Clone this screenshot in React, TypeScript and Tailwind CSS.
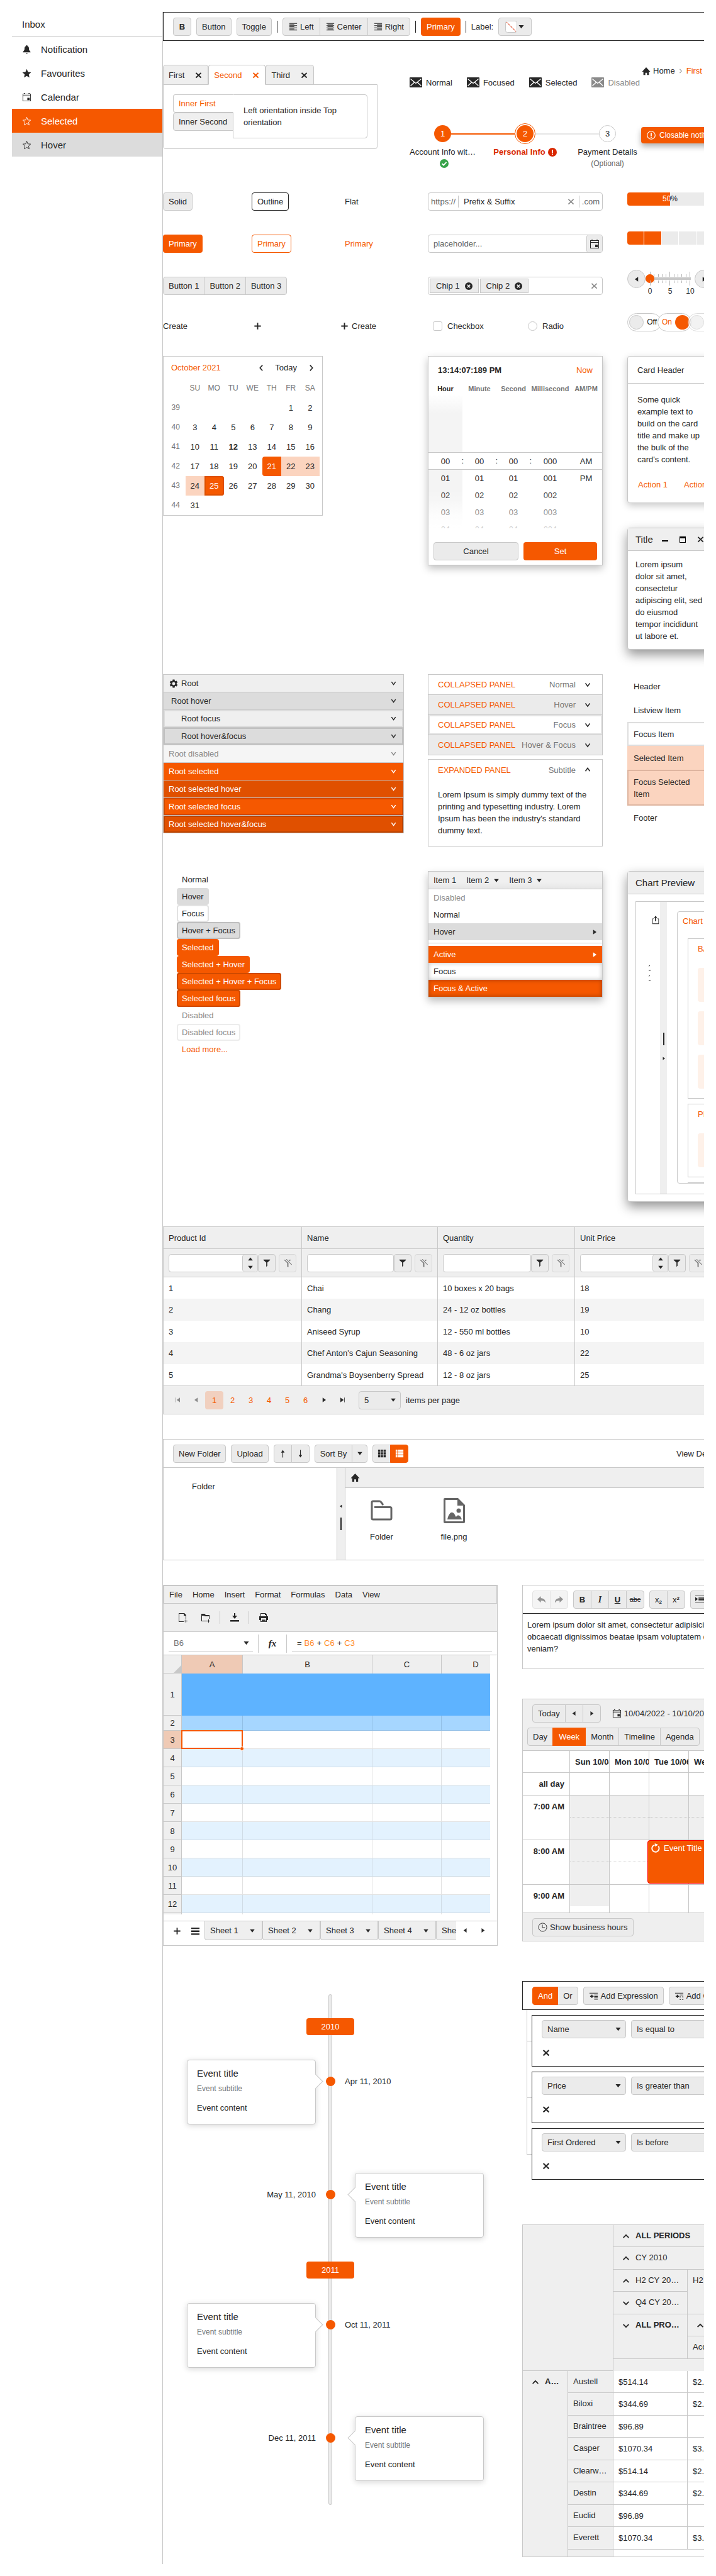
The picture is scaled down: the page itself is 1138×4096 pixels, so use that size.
import React from "react";
import { MdSettings } from "react-icons/md";

const PATHS: Record<string, string> = {
  bell: "M8 1a1.4 1.4 0 0 0-1.4 1.5C4.6 3.2 4.2 5 4.2 7.5 4.2 10.4 1.5 11 1.5 13h13c0-2-2.7-2.6-2.7-5.5 0-2.5-.4-4.3-2.4-5A1.4 1.4 0 0 0 8 1zM6.5 14a1.5 1.5 0 0 0 3 0z",
  star: "M8 .8l2.200 5 5.200.5-3.900 3.600 1.100 5.300L8 12.500l-4.600 2.700 1.100-5.300L.6 6.300l5.200-.5z",
  calendar: "M3 1v1H1v13h14V2h-2V1h-2v1H5V1zM2 3h12v2H2zM2 6h12v8H2zM9 9h4v4H9z",
  alignLeft: "M1 2h14v1H1zM1 4h9v1H1zM1 6h14v1H1zM1 8h9v1H1zM1 10h14v1H1zM1 12h9v1H1zM1 14h14v1H1z",
  alignCenter: "M1 2h14v1H1zM3 4h10v1H3zM1 6h14v1H1zM3 8h10v1H3zM1 10h14v1H1zM3 12h10v1H3zM1 14h14v1H1z",
  alignRight: "M1 2h14v1H1zM6 4h9v1H6zM1 6h14v1H1zM6 8h9v1H6zM1 10h14v1H1zM6 12h9v1H6zM1 14h14v1H1z",
  down: "M3 5h10l-5 6.5z",
  up: "M3 11h10L8 4.5z",
  left: "M11 3v10L4 8z",
  right: "M5 3v10l7-5z",
  home: "M8 1L.5 9H3v6h3.500v-4h3v4H13V9h2.500z",
  plus: "M7 2.500h2V7h4.500v2H9v4.500H7V9H2.500V7H7z",
  funnel: "M2 2h12v1L9 7.500v6L7 15V7.500L2 3z",
  funnelOff: "M1 2h2l4.500 4.500 1.500 1V15l-2-1V8zM5 1.500L6 1l9 9.500-1 .5zM9 2h4.500l-2.300 2.500z",
  first: "M3 3h1v10H3zM12 3v10L5 8z",
  last: "M12 3h1v10h-1zM4 3v10l7-5z",
  arrowUp: "M8 1.500l3 4.500H8.600v8.500H7.400V6H5z",
  arrowDown: "M8 14.500L5 10h2.400V1.500h1.200V10H11z",
  grid: "M1 1h4v4H1zM6 1h4v4H6zM11 1h4v4h-4zM1 6h4v4H1zM6 6h4v4H6zM11 6h4v4h-4zM1 11h4v4H1zM6 11h4v4H6zM11 11h4v4h-4z",
  list: "M1 1h3v4H1zM5 1h10v4H5zM1 6h3v4H1zM5 6h10v4H5zM1 11h3v4H1zM5 11h10v4H5z",
  fileAdd: "M1 1h9l3 3v6h-1V5h-3V2H2v12h7v1H1zM12 11h1v2h2v1h-2v2h-1v-2h-2v-1h2z",
  folderAdd: "M1 2h5l2 2h6v6h-1V6H6V5H2v8h8v1H1zM12 11h1v2h2v1h-2v2h-1v-2h-2v-1h2z",
  download: "M7 1h2v4h3L8 10 4 5h3zM1 12h14v2.500H1z",
  print: "M4 1h7l2 2v3h2v6h-2v3H3v-3H1V6h2V1zM4 2v4h8V4h-2V2zM4 9v5h8V9zM5 10h6v1H5zM5 12h6v1H5z",
  undo: "M7 2v3.500c4.500 0 8 2 8 8-1.500-3-4-4-8-4V13L1 7.500z",
  redo: "M9 2v3.500c-4.500 0-8 2-8 8 1.500-3 4-4 8-4V13l6-5.500z",
  indent: "M0 1h16v1H0zM6 4h10v1H6zM6 6h10v1H6zM6 8h10v1H6zM6 10h10v1H6zM0 13h16v1H0zM0 4l5 3.500L0 11z",
  bars: "M1 2h14v2.500H1zM1 7h14v2.500H1zM1 12h14v2.500H1z",
  export: "M8 0l3 4H9v6H7V4H5zM2 5h3v1H3v8h10V6h-2V5h3v10H2z",
  addExp: "M1 3h14v1H1zM4 6h2v2h2v1.500H6v2H4v-2H2V8h2zM9 6h6v1H9zM9 8.500h6v1H9zM9 11h6v1H9zM9 13.500h6v1H9z",
  addGroup: "M1 3h14v1H1zM4 6h2v2h2v1.500H6v2H4v-2H2V8h2zM9 6h6v1H9zM9 9h2v1h-1v1H9zM13 9h2v2h-1v-1h-1zM9 13h1v1h1v1H9zM14 13h1v2h-2v-1h1z",
};

function Icon({ name, size = 14, className = "" }: { name: string; size?: number; className?: string }) {
  return (
    <svg width={size} height={size} viewBox="0 0 16 16" fill="currentColor" fillRule="evenodd" className={"shrink-0 " + className} aria-hidden="true">
      <path d={PATHS[name]} />
    </svg>
  );
}

const LINES: Record<string, string> = {
  close: "M3 3.500l10 9.500M13 3.500L3 13",
  chevDown: "M4 5l4 5.500L12 5",
  chevUp: "M4 10.500L8 5l4 5.500",
  chevLeft: "M10.500 3L6 8l4.500 5",
  chevRight: "M5.500 3L10 8l-4.500 5",
  chevWideDown: "M3 5.500l5 5 5-5",
  chevWideUp: "M3 10.500l5-5 5 5",
  star: "M8 1.500l1.900 4.700 4.700.3-3.500 3.300 1 4.800L8 12l-4.100 2.600 1-4.800L1.400 6.500l4.700-.3z",
};

function Line({ name, size = 14, w = 2, className = "" }: { name: string; size?: number; w?: number; className?: string }) {
  return (
    <svg width={size} height={size} viewBox="0 0 16 16" fill="none" stroke="currentColor" strokeWidth={w} className={"shrink-0 " + className} aria-hidden="true">
      <path d={LINES[name]} />
    </svg>
  );
}

const BTN = "inline-flex h-[29px] shrink-0 items-center justify-center whitespace-nowrap rounded-[4px] border border-[#c8c8c8] bg-[#ebebeb] px-2";
const SEG = "-ml-px inline-flex h-[29px] shrink-0 items-center justify-center gap-1 whitespace-nowrap border border-[#c8c8c8] bg-[#ebebeb] px-2 first:ml-0 first:rounded-l-[4px] last:rounded-r-[4px]";
const SEG_ON = "relative -ml-px inline-flex h-[29px] shrink-0 items-center justify-center whitespace-nowrap border border-[#f55800] bg-[#f55800] px-2 text-white first:ml-0 first:rounded-l-[4px] last:rounded-r-[4px]";

function Sidebar() {
  const items = [
    { label: "Notification", icon: <Icon name="bell" size={15} />, cls: "" },
    { label: "Favourites", icon: <Icon name="star" size={15} />, cls: "" },
    { label: "Calendar", icon: <Icon name="calendar" size={15} />, cls: "" },
    { label: "Selected", icon: <Line name="star" size={15} w={1} />, cls: "bg-[#f55800] text-white" },
    { label: "Hover", icon: <Line name="star" size={15} w={1} />, cls: "bg-[#dcdcdc]" },
  ];
  return (
    <nav className="w-[239px] shrink-0 text-[15px]" aria-label="Mail folders">
      <h1 className="flex h-[40px] items-center border-b border-[#c8c8c8] px-4">Inbox</h1>
      <ul>
        {items.map((i) => (
          <li key={i.label}>
            <a href="#" className={"flex h-[38px] items-center gap-[15px] px-4 " + i.cls}>
              {i.icon}
              {i.label}
            </a>
          </li>
        ))}
      </ul>
    </nav>
  );
}

function Rule() {
  return <span className="h-[19px] w-px shrink-0 bg-[#272727]" />;
}

function Toolbar() {
  return (
    <div role="toolbar" className="flex h-[46px] items-center gap-2 border border-r-0 border-[#272727] pl-[15px]">
      <button className={BTN + " w-[29px] font-bold"}>B</button>
      <button className={BTN}>Button</button>
      <button className={BTN}>Toggle</button>
      <Rule />
      <div className="flex">
        <button className={SEG + " px-[9px]"}><Icon name="alignLeft" size={14} />Left</button>
        <button className={SEG + " px-[9px]"}><Icon name="alignCenter" size={14} />Center</button>
        <button className={SEG + " px-[9px]"}><Icon name="alignRight" size={14} />Right</button>
      </div>
      <Rule />
      <button className="h-[29px] rounded-[4px] bg-[#f55800] px-[9px] text-white">Primary</button>
      <Rule />
      <span>Label:</span>
      <button aria-label="Colour" className={BTN + " w-[53px] justify-between px-[5px]"}>
        <svg width="19" height="19" viewBox="0 0 19 19" aria-hidden="true">
          <rect x=".5" y=".5" width="18" height="18" rx="3" fill="#fff" stroke="#c8c8c8" />
          <path d="M2 2l15 15" stroke="#d92800" />
        </svg>
        <Icon name="down" size={13} />
      </button>
    </div>
  );
}

function Tabs() {
  const tab = "-mb-px flex h-[32px] items-center gap-4 rounded-t-[4px] border border-[#c8c8c8] px-2 ";
  return (
    <div className="w-[341px] shrink-0">
      <div role="tablist" className="flex">
        <button role="tab" className={tab + "bg-[#efefef]"}>First<Line name="close" size={13} w={2.4} /></button>
        <button role="tab" className={tab + "relative border-b-white bg-white text-[#f55800]"}>Second<Line name="close" size={13} w={2.4} /></button>
        <button role="tab" className={tab + "bg-[#efefef]"}>Third<Line name="close" size={13} w={2.4} /></button>
      </div>
      <div className="flex h-[103px] items-start rounded-b-[4px] border border-[#c8c8c8] p-[15px]">
        <div role="tablist" className="-mr-px flex w-[96px] shrink-0 flex-col">
          <button role="tab" className="relative h-[29px] rounded-l-[4px] border border-[#c8c8c8] border-r-white bg-white pl-2 text-left text-[#f55800]">Inner First</button>
          <button role="tab" className="h-[29px] rounded-l-[4px] border border-[#c8c8c8] bg-[#efefef] pl-2 text-left">Inner Second</button>
        </div>
        <div className="flex-1 rounded-r-[4px] border border-[#c8c8c8] px-4 py-[15px]">Left orientation inside Top orientation</div>
      </div>
    </div>
  );
}

function Mail({ label, cls = "" }: { label: string; cls?: string }) {
  return (
    <span className={"flex items-center gap-[6px] " + cls}>
      <svg width="20" height="16" viewBox="0 0 20 16" aria-hidden="true">
        <rect width="20" height="16" rx="1" fill="currentColor" />
        <path d="M1.500 2.500l8.500 7 8.500-7M1.500 13.500L7.500 8M18.500 13.500L12.500 8" fill="none" stroke="#fff" strokeWidth="1.300" />
      </svg>
      {label}
    </span>
  );
}

function Stepper() {
  return (
    <div className="w-[381px] shrink-0">
      <div className="mt-5 ml-[13px] flex h-4 w-[400px] items-center gap-[23px]">
        <Mail label="Normal" />
        <Mail label="Focused" />
        <Mail label="Selected" />
        <Mail label="Disabled" cls="text-[#8a8a8a]" />
      </div>
      <ol className="mt-[57px] flex">
        <li className="flex w-[131px] shrink-0 flex-col items-center">
          <div className="flex h-[33px] w-full items-center">
            <span className="flex-1" />
            <span className="grid size-[27px] place-items-center rounded-full bg-[#f55800] text-white">1</span>
            <span className="h-[2px] flex-1 bg-[#f55800]" />
          </div>
          <span className="mt-[3px]">Account Info wit…</span>
          <svg width="14" height="14" viewBox="0 0 16 16" className="mt-[2px] ml-1" aria-hidden="true">
            <circle cx="8" cy="8" r="8" fill="#37a34a" />
            <path d="M4 8.200l2.800 2.800L12 5.500" fill="none" stroke="#fff" strokeWidth="2" />
          </svg>
        </li>
        <li className="flex w-[131px] shrink-0 flex-col items-center">
          <div className="flex h-[33px] w-full items-center">
            <span className="h-[2px] flex-1 bg-[#f55800]" />
            <span className="grid size-[33px] place-items-center rounded-full border border-[#f55800]">
              <span className="grid size-[27px] place-items-center rounded-full bg-[#f55800] text-white">2</span>
            </span>
            <span className="h-[2px] flex-1 bg-[#e6e6e6]" />
          </div>
          <span className="mt-[3px] flex items-center gap-1 font-bold text-[#d92800]">
            Personal Info
            <svg width="14" height="14" viewBox="0 0 16 16" aria-hidden="true">
              <circle cx="8" cy="8" r="8" fill="#d92800" />
              <path d="M7 3.500h2V9H7zM7 10.500h2v2H7z" fill="#fff" />
            </svg>
          </span>
        </li>
        <li className="flex w-[131px] shrink-0 flex-col items-center">
          <div className="flex h-[33px] w-full items-center">
            <span className="h-[2px] flex-1 bg-[#e6e6e6]" />
            <span className="grid size-[27px] place-items-center rounded-full border border-[#c8c8c8]">3</span>
            <span className="flex-1" />
          </div>
          <span className="mt-[3px]">Payment Details</span>
          <span className="text-[12px] text-[#656565]">(Optional)</span>
        </li>
      </ol>
    </div>
  );
}

function NavigationRow() {
  return (
    <section className="mt-[38px] flex min-h-[203px]">
      <Tabs />
      <div className="ml-[38px]">
        <Stepper />
      </div>
      <div className="shrink-0">
        <nav aria-label="Breadcrumb" className="flex items-center gap-1 pl-px whitespace-nowrap">
          <a href="#" className="flex items-center gap-1"><Icon name="home" size={14} />Home</a>
          <Line name="chevRight" size={10} w={1.6} className="text-[#656565]" />
          <a href="#" className="text-[#f55800]">First item</a>
        </nav>
        <div role="status" className="mt-20 flex h-[26px] items-center gap-[6px] rounded-[4px] bg-[#f55800] px-[9px] text-[12px] whitespace-nowrap text-white shadow-[0_5px_10px_rgba(0,0,0,0.3)]">
          <svg width="14" height="14" viewBox="0 0 16 16" aria-hidden="true">
            <circle cx="8" cy="8" r="7.200" fill="none" stroke="currentColor" strokeWidth="1.300" />
            <path d="M7 3.500h2V9H7zM7 10.500h2v2H7z" fill="currentColor" />
          </svg>
          Closable notification
        </div>
      </div>
    </section>
  );
}

function Switch({ on, label, cls = "" }: { on?: boolean; label: string; cls?: string }) {
  return (
    <button role="switch" aria-checked={!!on} className={"relative -ml-[6px] flex h-[29px] w-[54px] shrink-0 items-center justify-between rounded-full border border-[#c8c8c8] bg-white px-[2px] text-[12px] first:ml-0 " + cls}>
      {on ? (
        <>
          <span className="pl-[4px] text-[#f55800]">{label}</span>
          <span className="size-[23px] rounded-full bg-[#f55800]" />
        </>
      ) : (
        <>
          <span className="size-[23px] rounded-full border border-[#c8c8c8] bg-[#ebebeb]" />
          <span className="pr-[4px]">{label}</span>
        </>
      )}
    </button>
  );
}

function Chip({ label }: { label: string }) {
  return (
    <span className="flex h-[23px] items-center gap-2 border border-[#c8c8c8] bg-[#ebebeb] px-[9px]">
      {label}
      <svg width="12" height="12" viewBox="0 0 16 16" aria-hidden="true">
        <circle cx="8" cy="8" r="8" fill="#272727" />
        <path d="M5 5l6 6M11 5l-6 6" stroke="#fff" strokeWidth="2" />
      </svg>
    </span>
  );
}

function Ticks({ align }: { align: string }) {
  return (
    <div className={"flex h-[8px] justify-between " + align}>
      {Array.from({ length: 11 }, (_, i) => (
        <span key={i} className={i % 5 === 0 ? "h-[8px] w-px bg-[#b5b5b5]" : "h-[4px] w-px bg-[#b5b5b5]"} />
      ))}
    </div>
  );
}

function InputsRow() {
  return (
    <section className="grid min-h-[260px] grid-cols-[421px_317px_minmax(0,1fr)]">
      <div>
        <div className="grid h-[67px] grid-cols-[141px_140px_140px] items-start justify-items-start">
          <button className={BTN}>Solid</button>
          <button className="h-[29px] rounded-[4px] border border-[#272727] px-2">Outline</button>
          <button className="h-[29px] px-2">Flat</button>
        </div>
        <div className="grid h-[67px] grid-cols-[141px_140px_140px] items-start justify-items-start">
          <button className="h-[29px] rounded-[4px] bg-[#f55800] px-[9px] text-white">Primary</button>
          <button className="h-[29px] rounded-[4px] border border-[#f55800] px-2 text-[#f55800]">Primary</button>
          <button className="h-[29px] px-2 text-[#f55800]">Primary</button>
        </div>
        <div className="flex h-[67px]">
          <button className={SEG}>Button 1</button>
          <button className={SEG}>Button 2</button>
          <button className={SEG}>Button 3</button>
        </div>
        <div className="grid h-[23px] grid-cols-[141px_140px_140px] items-center justify-items-start">
          <button>Create</button>
          <button aria-label="Add" className="pl-[2px]"><Icon name="plus" size={15} /></button>
          <button className="flex items-center gap-1"><Icon name="plus" size={15} />Create</button>
        </div>
      </div>
      <div className="w-[278px]">
        <div className="h-[67px]">
          <div className="flex h-[29px] items-center rounded-[4px] border border-[#c8c8c8] text-[#656565]">
            <span className="px-[4px]">https://</span>
            <span className="h-[19px] w-px bg-[#c8c8c8]" />
            <input aria-label="Address" defaultValue="Prefix & Suffix" className="min-w-0 flex-1 px-2 text-[#272727] outline-none" />
            <Line name="close" size={13} w={2} className="text-[#8a8a8a]" />
            <span className="ml-[6px] h-[19px] w-px bg-[#c8c8c8]" />
            <span className="px-[4px]">.com</span>
          </div>
        </div>
        <div className="h-[67px]">
          <div className="flex h-[29px] rounded-[4px] border border-[#c8c8c8]">
            <input aria-label="Date" placeholder="placeholder..." className="min-w-0 flex-1 px-2 outline-none placeholder:text-[#656565]" />
            <button aria-label="Open calendar" className="grid w-[25px] place-items-center rounded-[3px] border-l border-[#c8c8c8] bg-[#ebebeb]"><Icon name="calendar" size={16} /></button>
          </div>
        </div>
        <div className="h-[67px]">
          <div className="flex h-[29px] items-center gap-[2px] rounded-[4px] border border-[#c8c8c8] px-[2px]">
            <Chip label="Chip 1" />
            <Chip label="Chip 2" />
            <Line name="close" size={13} w={2} className="mr-[4px] ml-auto text-[#8a8a8a]" />
          </div>
        </div>
        <div className="flex h-[23px] items-center pl-2">
          <label className="flex w-[151px] items-center gap-2">
            <input type="checkbox" className="size-[15px] appearance-none rounded-[3px] border border-[#c8c8c8]" />
            Checkbox
          </label>
          <label className="flex items-center gap-2">
            <input type="radio" className="size-[15px] appearance-none rounded-full border border-[#c8c8c8]" />
            Radio
          </label>
        </div>
      </div>
      <div className="w-[136px]">
        <div role="progressbar" aria-valuenow={50} className="relative h-[21px] overflow-hidden rounded-[4px] bg-[#ebebeb] text-center text-[12px] leading-[21px]">
          50%
          <div aria-hidden="true" className="absolute inset-y-0 left-0 w-[68px] overflow-hidden bg-[#f55800] text-white">
            <div className="w-[136px]">50%</div>
          </div>
        </div>
        <div className="mt-[41px] flex h-[21px] gap-px overflow-hidden rounded-[4px]">
          <span className="flex-1 bg-[#f55800]" />
          <span className="flex-1 bg-[#f55800]" />
          <span className="flex-1 bg-[#ebebeb]" />
          <span className="flex-1 bg-[#ebebeb]" />
          <span className="flex-1 bg-[#ebebeb]" />
        </div>
        <div className="mt-[40px] flex h-[43px] items-start">
          <button aria-label="Decrease" className="grid size-[29px] shrink-0 place-items-center rounded-full border border-[#c8c8c8] bg-[#ebebeb]"><Icon name="left" size={12} /></button>
          <div className="w-[78px] shrink-0 px-[7px] pt-[3px]">
            <Ticks align="items-end" />
            <input type="range" min={0} max={10} defaultValue={0} aria-label="Amount" className="-mx-[7px] -my-[4px] block h-[14px] w-[78px] appearance-none bg-[linear-gradient(#c8c8c8,#c8c8c8)] bg-[length:66px_4px] bg-center bg-no-repeat [&::-webkit-slider-thumb]:size-[14px] [&::-webkit-slider-thumb]:appearance-none [&::-webkit-slider-thumb]:rounded-full [&::-webkit-slider-thumb]:bg-[#f55800]" />
            <Ticks align="items-start" />
            <div className="-mx-[7px] flex justify-between text-[12px]">
              <span className="w-[14px] text-center">0</span>
              <span className="w-[14px] text-center">5</span>
              <span className="w-[14px] text-center">10</span>
            </div>
          </div>
          <button aria-label="Increase" className="grid size-[29px] shrink-0 place-items-center rounded-full border border-[#c8c8c8] bg-[#ebebeb]"><Icon name="right" size={12} /></button>
        </div>
        <div className="mt-[26px] flex">
          <Switch label="Off" />
          <Switch on label="On" />
          <Switch label="Off" cls="opacity-60" />
        </div>
      </div>
    </section>
  );
}

function CalendarBox() {
  const weeks: [number, (number | null)[]][] = [
    [39, [null, null, null, null, null, 1, 2]],
    [40, [3, 4, 5, 6, 7, 8, 9]],
    [41, [10, 11, 12, 13, 14, 15, 16]],
    [42, [17, 18, 19, 20, 21, 22, 23]],
    [43, [24, 25, 26, 27, 28, 29, 30]],
    [44, [31, null, null, null, null, null, null]],
  ];
  const style: Record<number, string> = {
    12: "font-bold",
    21: "rounded-l-[4px] bg-[#f55800] text-white",
    22: "bg-[#fbd4bf]",
    23: "bg-[#fbd4bf]",
    24: "bg-[#fbd4bf]",
    25: "rounded-r-[4px] bg-[#f55800] text-white shadow-[inset_0_0_0_2px_#dd4f00]",
  };
  return (
    <div className="w-[254px] border border-[#c8c8c8] px-[4px]">
      <div className="flex h-[35px] items-center pl-2">
        <button className="mr-auto text-[#f55800]">October 2021</button>
        <button aria-label="Previous month" className="grid w-[27px] place-items-center"><Line name="chevLeft" size={14} w={1.8} /></button>
        <button className="px-[9px]">Today</button>
        <button aria-label="Next month" className="grid w-[27px] place-items-center"><Line name="chevRight" size={14} w={1.8} /></button>
      </div>
      <table className="w-full table-fixed text-center">
        <thead>
          <tr className="h-[31px] text-[12px] text-[#757575]">
            <th />
            {["SU", "MO", "TU", "WE", "TH", "FR", "SA"].map((d) => <th key={d} className="font-normal">{d}</th>)}
          </tr>
        </thead>
        <tbody>
          {weeks.map(([n, days]) => (
            <tr key={n} className="h-[31px]">
              <td className="text-[12px] text-[#757575]">{n}</td>
              {days.map((d, i) => <td key={i} className={d ? style[d] : ""}>{d}</td>)}
            </tr>
          ))}
        </tbody>
      </table>
    </div>
  );
}

function TimePicker() {
  const cols = [
    { name: "Hour", v: ["00", "01", "02", "03", "04"] },
    { name: "Minute", v: ["00", "01", "02", "03", "04"] },
    { name: "Second", v: ["00", "01", "02", "03", "04"] },
    { name: "Millisecond", v: ["000", "001", "002", "003", "004"] },
    { name: "AM/PM", v: ["AM", "PM"] },
  ];
  const tpl = "grid grid-cols-[54px_54px_54px_63px_minmax(0,1fr)] ";
  return (
    <div className="h-[333px] w-[278px] border border-[#c8c8c8] bg-white shadow-[0_5px_12px_rgba(0,0,0,0.25)]">
      <div className="flex h-[43px] items-center justify-between px-[15px]">
        <b>13:14:07:189 PM</b>
        <button className="text-[#f55800]">Now</button>
      </div>
      <div className={tpl + "h-[17px] text-center text-[11px] leading-[16px] font-bold text-[#757575]"}>
        {cols.map((c, i) => <span key={c.name} className={i === 0 ? "text-[#272727]" : ""}>{c.name}</span>)}
      </div>
      <div className={tpl + "relative h-[213px] overflow-hidden text-center"}>
        <div className="bg-[linear-gradient(#ffffff,#f4f4f4_30px,#f4f4f4_170px,#ffffff)]" />
        <div className="absolute inset-x-0 top-[92px] h-[28px] border-y border-[#c8c8c8] bg-white" />
        <div className={tpl + "absolute inset-0"}>
          {cols.map((c, i) => (
            <ul key={c.name} className="relative pt-[93px]">
              {c.v.map((t) => <li key={t} className="h-[27px] leading-[27px]">{t}</li>)}
              {i < 3 && <li className="absolute top-[93px] -right-[2px] leading-[26px]">:</li>}
            </ul>
          ))}
        </div>
        <div className="absolute inset-x-0 bottom-0 h-[62px] bg-[linear-gradient(rgba(255,255,255,0),rgba(255,255,255,0.8))]" />
      </div>
      <div className="mt-[22px] flex gap-2 px-2">
        <button className={BTN + " flex-1"}>Cancel</button>
        <button className="h-[29px] flex-1 rounded-[4px] bg-[#f55800] text-white">Set</button>
      </div>
    </div>
  );
}

function PopupsRow() {
  return (
    <section className="grid min-h-[506px] grid-cols-[421px_317px_minmax(0,1fr)] items-start">
      <CalendarBox />
      <TimePicker />
      <div className="w-[136px]">
        <article className="h-[234px] rounded-[4px] border border-[#c8c8c8] bg-white shadow-[0_4px_12px_rgba(0,0,0,0.22)]">
          <h2 className="flex h-[43px] items-center border-b border-[#c8c8c8] px-[15px]">Card Header</h2>
          <p className="px-[15px] pt-[16px] pb-[21px]">Some quick example text to build on the card title and make up the bulk of the card's content.</p>
          <div className="flex gap-[26px] px-4 whitespace-nowrap text-[#f55800]">
            <button>Action 1</button>
            <button>Action 2</button>
          </div>
        </article>
        <article className="mt-[39px] h-[194px] rounded-[4px] border border-[#c8c8c8] bg-white shadow-[0_8px_18px_rgba(0,0,0,0.42)]">
          <div className="flex h-[36px] items-center border-b border-[#c8c8c8] bg-[#efefef] pr-[5px] pl-[12px] text-[15px]">
            <h2>Title</h2>
            <button aria-label="Minimize" className="ml-[5px] grid w-[28px] place-items-center pt-[4px]"><svg width="10" height="2" aria-hidden="true"><path d="M0 0h10v2H0z" /></svg></button>
            <button aria-label="Maximize" className="grid w-[29px] place-items-center"><svg width="10" height="10" aria-hidden="true"><path d="M0 0h10v10H0zM1 3v6h8V3z" fillRule="evenodd" /></svg></button>
            <button aria-label="Close" className="grid w-[28px] place-items-center"><Line name="close" size={13} w={2.2} /></button>
          </div>
          <p className="pt-[12px] pr-[13px] pl-[12px]">Lorem ipsum<br />dolor sit amet, consectetur adipiscing elit, sed do eiusmod tempor incididunt ut labore et.</p>
        </article>
      </div>
    </section>
  );
}

function PanelsRow() {
  const rows = [
    { t: "Root", c: "bg-[#efefef] pl-2", gear: true },
    { t: "Root hover", c: "bg-[#dcdcdc] pl-[12px]" },
    { t: "Root focus", c: "bg-[#efefef] pl-[28px] shadow-[inset_0_0_0_2px_#dcdcdc]" },
    { t: "Root hover&focus", c: "bg-[#dcdcdc] pl-[28px] shadow-[inset_0_0_0_2px_#c0c0c0]" },
    { t: "Root disabled", c: "bg-[#f5f5f5] pl-2 text-[#8a8a8a]" },
    { t: "Root selected", c: "bg-[#f55800] pl-2 text-white" },
    { t: "Root selected hover", c: "bg-[#e05000] pl-2 text-white" },
    { t: "Root selected focus", c: "bg-[#f55800] pl-2 text-white shadow-[inset_0_0_0_2px_#cf4a00]" },
    { t: "Root selected hover&focus", c: "bg-[#e05000] pl-2 text-white shadow-[inset_0_0_0_2px_#bb4300]" },
  ];
  const panels = [
    { s: "Normal", c: "bg-white" },
    { s: "Hover", c: "bg-[#ebebeb]" },
    { s: "Focus", c: "bg-white shadow-[inset_0_0_0_2px_#e2e2e2]" },
    { s: "Hover & Focus", c: "bg-[#ebebeb]" },
  ];
  return (
    <section className="grid min-h-[313px] grid-cols-[421px_317px_minmax(0,1fr)] items-start">
      <ul className="w-[383px] border border-[#c8c8c8]">
        {rows.map((r) => (
          <li key={r.t} className="border-b border-[#c8c8c8] last:border-b-0">
            <button className={"flex h-[27px] w-full items-center gap-1 pr-[9px] text-left " + r.c}>
              {r.gear && <MdSettings size={16} />}
              {r.t}
              <Line name="chevDown" size={13} w={1.8} className="ml-auto" />
            </button>
          </li>
        ))}
      </ul>
      <div className="w-[278px]">
        <div className="border border-[#c8c8c8]">
          {panels.map((p) => (
            <div key={p.s} className="border-b border-[#c8c8c8] last:border-b-0">
              <button className={"flex h-[31px] w-full items-center pr-4 pl-[15px] whitespace-nowrap " + p.c}>
                <span className="text-[#f55800]">COLLAPSED PANEL</span>
                <span className="ml-auto text-[#757575]">{p.s}</span>
                <Line name="chevDown" size={14} w={1.8} className="ml-3" />
              </button>
            </div>
          ))}
        </div>
        <div className="mt-[6px] border border-[#c8c8c8]">
          <button className="flex h-[32px] w-full items-center pr-4 pl-[15px]">
            <span className="text-[#f55800]">EXPANDED PANEL</span>
            <span className="ml-auto text-[#757575]">Subtitle</span>
            <Line name="chevUp" size={14} w={1.8} className="ml-3" />
          </button>
          <p className="px-[15px] pt-[14px] pb-[15px]">Lorem Ipsum is simply dummy text of the printing and typesetting industry. Lorem Ipsum has been the industry's standard dummy text.</p>
        </div>
      </div>
      <ul className="w-[136px]">
        <li className="flex h-[38px] items-center px-[10px]">Header</li>
        <li className="flex h-[38px] items-center px-[10px]">Listview Item</li>
        <li className="flex h-[38px] items-center px-[10px] shadow-[inset_0_0_0_2px_#dedede]">Focus Item</li>
        <li className="flex h-[38px] items-center bg-[#fbd4bf] px-[10px]">Selected Item</li>
        <li className="flex h-[57px] items-center bg-[#fbd4bf] pr-[30px] pl-[10px] shadow-[inset_0_0_0_2px_#deb5a0]">Focus Selected Item</li>
        <li className="flex h-[39px] items-center px-[10px]">Footer</li>
      </ul>
    </section>
  );
}

function ChartPane({ title, count }: { title: string; count: number }) {
  return (
    <div className="mb-2 ml-4 w-[240px] border border-[#c8c8c8] pb-[15px] pl-[15px]">
      <h3 className="pt-[6px] pb-[21px] text-[#f55800]">{title}</h3>
      <div className="grid gap-[15px]">
        {Array.from({ length: count }, (_, i) => <div key={i} className="h-[54px] w-[54px] rounded-[4px] bg-[#fef1e9]" />)}
      </div>
    </div>
  );
}

function ChartWindow() {
  const mark = (
    <svg width="4" height="10" viewBox="0 0 4 10" aria-hidden="true">
      <path d="M1 2.500L3 1M1 9h3" stroke="#272727" fill="none" />
    </svg>
  );
  return (
    <article className="h-[526px] w-[300px] rounded-[4px] border border-[#c8c8c8] bg-white shadow-[0_8px_18px_rgba(0,0,0,0.42)]">
      <h2 className="flex h-[36px] items-center border-b border-[#c8c8c8] bg-[#efefef] pl-[12px] text-[15px]">Chart Preview</h2>
      <div className="mt-[11px] ml-[12px] flex h-[466px] border border-[#c8c8c8]">
        <div className="flex w-[38px] shrink-0 flex-col items-start pl-[19px]">
          <button aria-label="Export" className="mt-[22px] ml-[5px]"><Icon name="export" size={14} /></button>
          <div className="mt-[64px]">{mark}</div>
          <div className="mt-[6px]">{mark}</div>
        </div>
        <div className="flex w-[11px] shrink-0 flex-col items-center bg-[#efefef] pt-[208px]">
          <span className="h-5 w-[2px] bg-[#272727]" />
          <Icon name="right" size={8} className="mt-[17px]" />
        </div>
        <div className="pt-[15px] pl-4">
          <div className="h-[433px] w-[280px] overflow-hidden rounded-[4px] border border-[#c8c8c8]">
            <button className="block h-[28px] px-2 text-[#f55800]">Chart</button>
            <div className="pt-[14px]">
              <ChartPane title="BAR" count={3} />
              <ChartPane title="PIE" count={1} />
              <div className="ml-4 h-[40px] w-[240px] border border-[#c8c8c8]" />
            </div>
          </div>
        </div>
      </div>
    </article>
  );
}

function MenusRow() {
  const items = [
    ["Normal", ""],
    ["Hover", "bg-[#dcdcdc]"],
    ["Focus", "shadow-[inset_0_0_0_2px_#e2e2e2]"],
    ["Hover + Focus", "bg-[#dcdcdc] shadow-[inset_0_0_0_2px_#bfbfbf]"],
    ["Selected", "bg-[#f55800] text-white"],
    ["Selected + Hover", "bg-[#f55800] text-white"],
    ["Selected + Hover + Focus", "bg-[#f55800] text-white shadow-[inset_0_0_0_2px_#cf4a00]"],
    ["Selected focus", "bg-[#f55800] text-white shadow-[inset_0_0_0_2px_#cf4a00]"],
    ["Disabled", "text-[#8a8a8a]"],
    ["Disabled focus", "text-[#8a8a8a] shadow-[inset_0_0_0_2px_#ececec]"],
    ["Load more...", "text-[#f55800]"],
  ];
  const row = "flex h-[27px] items-center justify-between px-2 ";
  return (
    <section className="grid min-h-[565px] grid-cols-[421px_317px_minmax(0,1fr)] items-start">
      <ul className="pl-[22px]">
        {items.map(([t, c]) => (
          <li key={t} className="flex h-[27px]">
            <button className={"h-[27px] rounded-[4px] px-2 " + c}>{t}</button>
          </li>
        ))}
      </ul>
      <div className="w-[278px] shadow-[0_6px_12px_rgba(0,0,0,0.25)]">
        <div role="menubar" className="flex h-[29px] items-center border border-[#c8c8c8] bg-[linear-gradient(#f0f0f0_60%,#e6e6e6)] px-2">
          <button>Item 1</button>
          <button className="ml-4 flex items-center gap-[6px]">Item 2<Icon name="down" size={12} /></button>
          <button className="ml-[14px] flex items-center gap-[6px]">Item 3<Icon name="down" size={12} /></button>
        </div>
        <ul role="menu" className="border border-t-0 border-[#c8c8c8] bg-white">
          <li role="menuitem" className={row + "text-[#8a8a8a]"}>Disabled</li>
          <li role="menuitem" className={row}>Normal</li>
          <li role="menuitem" className={row + "bg-[#dcdcdc]"}>Hover<Icon name="right" size={12} className="-mr-[2px]" /></li>
          <li role="separator" className="my-1 h-px bg-[#c8c8c8]" />
          <li role="menuitem" className={row + "bg-[#f55800] text-white"}>Active<Icon name="right" size={12} className="-mr-[2px]" /></li>
          <li role="menuitem" className={row + "shadow-[inset_0_0_6px_1px_rgba(0,0,0,0.2)]"}>Focus</li>
          <li role="menuitem" className={row + "bg-[#f55800] text-white shadow-[inset_0_0_6px_1px_rgba(0,0,0,0.25)]"}>Focus &amp; Active</li>
        </ul>
      </div>
      <ChartWindow />
    </section>
  );
}

function FilterCell({ label, num }: { label: string; num?: boolean }) {
  return (
    <td className="border-b border-l border-[#c8c8c8] px-2 first:border-l-0">
      <div className="flex">
        <div className="flex h-[29px] min-w-0 flex-1 overflow-hidden rounded-[4px] border border-[#c8c8c8] bg-white">
          <input aria-label={"Filter " + label} className="min-w-0 flex-1 px-2 outline-none" />
          {num && (
            <span className="flex w-[24px] flex-col items-center justify-between rounded-[4px] border-l border-[#c8c8c8] bg-[#ebebeb] py-px">
              <button aria-label="Increase"><Icon name="up" size={12} /></button>
              <button aria-label="Decrease"><Icon name="down" size={12} /></button>
            </span>
          )}
        </div>
        <button aria-label="Filter" className={BTN + " w-[28px]"}><Icon name="funnel" size={14} /></button>
        <button aria-label="Clear filter" className={BTN + " ml-[5px] w-[28px] opacity-60"}><Icon name="funnelOff" size={15} /></button>
      </div>
    </td>
  );
}

function GridSection() {
  const rows = [
    ["1", "Chai", "10 boxes x 20 bags", "18"],
    ["2", "Chang", "24 - 12 oz bottles", "19"],
    ["3", "Aniseed Syrup", "12 - 550 ml bottles", "10"],
    ["4", "Chef Anton's Cajun Seasoning", "48 - 6 oz jars", "22"],
    ["5", "Grandma's Boysenberry Spread", "12 - 8 oz jars", "25"],
  ];
  const pg = "grid h-[29px] w-[29px] place-items-center rounded-[4px] ";
  return (
    <section className="min-h-[338px]">
      <div className="w-[873px] border border-[#c8c8c8]">
        <table className="w-full table-fixed border-separate border-spacing-0 text-left">
          <colgroup>
            <col className="w-[219px]" />
            <col className="w-[216px]" />
            <col className="w-[218px]" />
            <col className="w-[218px]" />
          </colgroup>
          <thead className="bg-[#efefef]">
            <tr className="h-[35px]">
              {["Product Id", "Name", "Quantity", "Unit Price"].map((h) => (
                <th key={h} className="border-b border-l border-[#c8c8c8] px-2 font-normal first:border-l-0">{h}</th>
              ))}
            </tr>
            <tr className="h-[45px]">
              <FilterCell label="Product Id" num />
              <FilterCell label="Name" />
              <FilterCell label="Quantity" />
              <FilterCell label="Unit Price" num />
            </tr>
          </thead>
          <tbody>
            {rows.map((r) => (
              <tr key={r[0]} className="odd:h-[34px] even:h-[35px] even:bg-[#f4f4f4]">
                {r.map((c, i) => <td key={i} className="border-l border-[#c8c8c8] px-2 whitespace-nowrap first:border-l-0">{c}</td>)}
              </tr>
            ))}
          </tbody>
        </table>
        <div className="flex h-[45px] items-center border-t border-[#c8c8c8] bg-[#efefef] pl-2">
          <button aria-label="First page" className={pg + "text-[#8a8a8a]"}><Icon name="first" size={12} /></button>
          <button aria-label="Previous page" className={pg + "text-[#8a8a8a]"}><Icon name="left" size={12} /></button>
          {[1, 2, 3, 4, 5, 6].map((n) => (
            <button key={n} className={pg + (n === 1 ? "bg-[#f1d0bf] text-[#f55800]" : "text-[#f55800]")}>{n}</button>
          ))}
          <button aria-label="Next page" className={pg}><Icon name="right" size={12} /></button>
          <button aria-label="Last page" className={pg}><Icon name="last" size={12} /></button>
          <div className="relative ml-3">
            <select id="page-size" className="h-[29px] w-[67px] appearance-none rounded-[4px] border border-[#c8c8c8] bg-[#ebebeb] pl-2"><option>5</option></select>
            <Icon name="down" size={12} className="pointer-events-none absolute top-2 right-[6px]" />
          </div>
          <label htmlFor="page-size" className="ml-2">items per page</label>
        </div>
      </div>
    </section>
  );
}

function FileManager() {
  return (
    <section className="min-h-[232px]">
      <div className="h-[193px] w-[930px] border border-[#c8c8c8]">
        <div className="flex h-[44px] items-center gap-2 px-[15px]">
          <button className={BTN}>New Folder</button>
          <button className={BTN}>Upload</button>
          <div className="flex">
            <button aria-label="Ascending" className={SEG + " w-[29px]"}><Icon name="arrowUp" size={15} /></button>
            <button aria-label="Descending" className={SEG + " w-[29px]"}><Icon name="arrowDown" size={15} /></button>
          </div>
          <div className="flex">
            <button className={SEG}>Sort By</button>
            <button aria-label="Sort options" className={SEG + " w-[25px]"}><Icon name="down" size={12} /></button>
          </div>
          <div className="flex">
            <button aria-label="Grid view" className={SEG + " w-[29px]"}><Icon name="grid" size={14} /></button>
            <button aria-label="List view" className={SEG_ON + " w-[29px]"}><Icon name="list" size={14} /></button>
          </div>
          <label className="ml-auto flex w-[98px] items-center gap-2 whitespace-nowrap">
            View Details
            <input type="checkbox" className="size-[15px]" />
          </label>
        </div>
        <div className="flex h-[147px] border-t border-[#c8c8c8]">
          <div className="w-[275px] shrink-0 pt-[20px] pl-[45px]">Folder</div>
          <div className="flex w-[14px] shrink-0 flex-col items-center border-x border-[#c8c8c8] bg-[#efefef] pt-[57px]">
            <Icon name="left" size={8} />
            <span className="mt-[14px] h-[20px] w-[2px] bg-[#272727]" />
          </div>
          <div className="flex-1">
            <nav aria-label="Path" className="flex h-[32px] items-center border-b border-[#c8c8c8] bg-[#efefef] pl-2">
              <a href="#" aria-label="Home"><Icon name="home" size={15} /></a>
            </nav>
            <ul className="flex pt-[15px] text-center">
              <li className="w-[115px]">
                <svg width="40" height="42" viewBox="0 0 40 42" className="mx-auto" fill="none" stroke="#656565" strokeWidth="3" aria-hidden="true">
                  <path d="M8 15.500h25q2 0 2 2V33q0 2-2 2H6q-2 0-2-2V8q0-2 2-2h10q2 0 3 2l3 4" />
                </svg>
                <span className="mt-[11px] block">Folder</span>
              </li>
              <li className="w-[115px]">
                <svg width="40" height="42" viewBox="0 0 40 42" className="mx-auto" aria-hidden="true">
                  <path d="M3 3q0-2 2-2h21l11 11v27q0 2-2 2H5q-2 0-2-2zM6 4v34h28V13h-9V4z" fill="#656565" fillRule="evenodd" />
                  <circle cx="27" cy="21" r="3.500" fill="#656565" />
                  <path d="M9 35c2-8 5-12 8-11 4 1 4 5 6 7 1-2 2-3 5-2 2 1 3 3 4 6z" fill="#656565" />
                </svg>
                <span className="mt-[11px] block">file.png</span>
              </li>
            </ul>
          </div>
        </div>
      </div>
    </section>
  );
}

function Spreadsheet() {
  const line = (n: number) => {
    if (n === 1) return "bg-[#5eb3ff]";
    if (n === 2) return "bg-[#a6d6ff] border-r border-b border-[#92bfe6]";
    return n % 2 === 0 ? "bg-[#e3f2fe] border-r border-b border-[#d0dce6]" : "bg-white border-r border-b border-[#e2e2e2]";
  };
  return (
    <div className="flex h-[574px] w-[532px] flex-col border border-[#c8c8c8]">
      <div role="menubar" className="flex h-[29px] items-center gap-4 border border-[#c8c8c8] bg-[#efefef] pl-2">
        {["File", "Home", "Insert", "Format", "Formulas", "Data", "View"].map((m) => <button key={m}>{m}</button>)}
      </div>
      <div className="flex h-[45px] items-center border-b border-[#c8c8c8] bg-[#efefef] pl-[23px]">
        <button aria-label="New"><Icon name="fileAdd" size={16} /></button>
        <button aria-label="Open" className="ml-5"><Icon name="folderAdd" size={16} /></button>
        <span className="ml-[14px] h-[20px] w-px bg-[#c8c8c8]" />
        <button aria-label="Download" className="ml-[15px]"><Icon name="download" size={16} /></button>
        <span className="ml-[14px] h-[20px] w-px bg-[#c8c8c8]" />
        <button aria-label="Print" className="ml-[15px]"><Icon name="print" size={16} /></button>
      </div>
      <div className="flex h-[37px] items-center border-b border-[#c8c8c8] px-2">
        <div className="flex h-[28px] w-[134px] items-center justify-between border-b border-[#c8c8c8] px-2 text-[#757575]">
          B6
          <Icon name="down" size={13} className="-mr-1 text-[#272727]" />
        </div>
        <span className="mx-2 h-[29px] w-px bg-[#c8c8c8]" />
        <span className="w-[28px] text-center font-['Liberation_Serif',serif] text-[15px] font-bold italic">fx</span>
        <span className="mx-2 h-[29px] w-px bg-[#c8c8c8]" />
        <div className="flex h-[28px] flex-1 items-center gap-1 border-b border-[#c8c8c8] pl-2">
          = <span className="text-[#ff8c2a]">B6</span> + <span className="text-[#ff8c2a]">C6</span> + <span className="text-[#ff8c2a]">C3</span>
        </div>
      </div>
      <div className="h-[412px] w-[519px] overflow-hidden">
        <table className="w-[551px] table-fixed border-separate border-spacing-0 text-center">
          <colgroup>
            <col className="w-[29px]" />
            <col className="w-[97px]" />
            <col className="w-[206px]" />
            <col className="w-[110px]" />
            <col className="w-[109px]" />
          </colgroup>
          <thead>
            <tr className="h-[29px] bg-[#efefef]">
              <th aria-label="Select all" className="border-r border-b border-[#c8c8c8] p-0 align-bottom"><svg width="12" height="12" viewBox="0 0 12 12" className="ml-auto"><path d="M12 0v12H0z" fill="#c8c8c8" /></svg></th>
              {["A", "B", "C", "D"].map((c) => (
                <th key={c} className={"border-r border-[#c8c8c8] font-normal " + (c === "A" ? "bg-[#efcab5]" : "")}>{c}</th>
              ))}
            </tr>
          </thead>
          <tbody>
            {Array.from({ length: 13 }, (_, k) => k + 1).map((n) => (
              <tr key={n} className={n === 1 ? "h-[67px]" : n === 2 ? "h-[24px]" : "h-[29px]"}>
                <th className={"border-r border-b border-[#c8c8c8] font-normal " + (n === 3 ? "bg-[#efcab5]" : "bg-[#efefef]")}>{n < 13 ? n : ""}</th>
                {["A", "B", "C", "D"].map((c) => (
                  <td key={c} className={"relative " + line(n)}>
                    {n === 3 && c === "A" && (
                      <>
                        <span className="absolute -inset-px border-2 border-[#f55800]" />
                        <span className="absolute -right-[3px] -bottom-[4px] z-10 size-[7px] rounded-full border border-white bg-[#f55800]" />
                      </>
                    )}
                  </td>
                ))}
              </tr>
            ))}
          </tbody>
        </table>
      </div>
      <div className="mt-auto flex h-[39px] items-start border-t border-[#c8c8c8] pl-[14px]">
        <button aria-label="Add sheet" className="mt-2"><Icon name="plus" size={15} /></button>
        <button aria-label="All sheets" className="mt-2 ml-[14px]"><Icon name="bars" size={15} /></button>
        <div className="ml-[7px] flex w-[400px] overflow-hidden">
          {[1, 2, 3, 4, 5].map((n) => (
            <button key={n} className="flex h-[30px] w-[92px] shrink-0 items-center justify-between rounded-b-[4px] border border-t-0 border-[#c8c8c8] bg-[#efefef] pr-[9px] pl-2">
              Sheet {n}
              <Icon name="down" size={12} />
            </button>
          ))}
        </div>
        <button aria-label="Scroll left" className="mt-[9px] ml-[9px]"><Icon name="left" size={11} /></button>
        <button aria-label="Scroll right" className="mt-[9px] ml-[17px]"><Icon name="right" size={11} /></button>
      </div>
    </div>
  );
}

function Editor() {
  return (
    <div className="h-[134px] w-[400px] border border-[#c8c8c8]">
      <div className="flex h-[45px] items-center gap-2 border-b border-[#272727] pl-[15px]">
        <div className="flex text-[#272727] opacity-50">
          <button aria-label="Undo" className={SEG + " w-[29px]"}><Icon name="undo" size={15} /></button>
          <button aria-label="Redo" className={SEG + " w-[29px]"}><Icon name="redo" size={15} /></button>
        </div>
        <div className="flex">
          <button className={SEG + " w-[29px] font-bold"}>B</button>
          <button className={SEG + " w-[29px] font-['Liberation_Serif',serif] text-[14px] font-bold italic"}>I</button>
          <button className={SEG + " w-[29px] font-bold underline"}>U</button>
          <button className={SEG + " w-[29px] text-[11px] line-through"}>abc</button>
        </div>
        <div className="flex">
          <button className={SEG + " w-[29px]"}><span>x<sub className="text-[8px] font-bold">2</sub></span></button>
          <button className={SEG + " w-[29px]"}><span>x<sup className="text-[8px] font-bold">2</sup></span></button>
        </div>
        <div className="flex">
          <button aria-label="Indent" className={SEG + " w-[29px]"}><Icon name="indent" size={14} /></button>
          <button aria-label="Outdent" className={SEG + " w-[29px]"}><Icon name="alignLeft" size={14} /></button>
        </div>
      </div>
      <p className="px-[7px] pt-2 whitespace-nowrap">
        Lorem ipsum dolor sit amet, consectetur adipisicing elit.
        <br />
        obcaecati dignissimos beatae ipsam voluptatem quam
        <br />
        veniam?
      </p>
    </div>
  );
}

function Scheduler() {
  const days = ["Sun 10/04", "Mon 10/05", "Tue 10/06", "Wed 10/07", "Thu 10/08"];
  const cell = "relative border-l border-[#c8c8c8] p-0 ";
  return (
    <div className="mt-[47px] h-[386px] w-[396px] border border-[#c8c8c8] bg-[#efefef]">
      <div className="flex h-[45px] items-center pl-[15px]">
        <div className="flex">
          <button className={SEG}>Today</button>
          <button aria-label="Previous" className={SEG + " w-[29px]"}><Icon name="left" size={11} /></button>
          <button aria-label="Next" className={SEG + " w-[29px]"}><Icon name="right" size={11} /></button>
        </div>
        <button className="ml-[18px] flex items-center gap-1 whitespace-nowrap"><Icon name="calendar" size={15} />10/04/2022 - 10/10/2022</button>
      </div>
      <div className="flex h-[36px] pl-[7px]">
        <button className={SEG}>Day</button>
        <button className={SEG_ON + " px-[9px]"}>Week</button>
        <button className={SEG}>Month</button>
        <button className={SEG}>Timeline</button>
        <button className={SEG}>Agenda</button>
      </div>
      <div className="h-[259px] overflow-hidden border-y border-[#c8c8c8] bg-white">
        <table className="w-[389px] table-fixed border-separate border-spacing-0">
          <colgroup>
            <col className="w-[74px]" />
            {days.map((d) => <col key={d} className="w-[63px]" />)}
          </colgroup>
          <thead>
            <tr className="h-[35px]">
              <th className="border-b border-[#c8c8c8]" />
              {days.map((d) => <th key={d} className="overflow-hidden border-b border-l border-[#c8c8c8] pl-2 text-left whitespace-nowrap">{d}</th>)}
            </tr>
            <tr className="h-[36px]">
              <th className="border-b border-[#c8c8c8] pr-2 text-right">all day</th>
              {days.map((d) => <td key={d} className="border-b border-l border-[#c8c8c8]" />)}
            </tr>
          </thead>
          <tbody>
            {["7:00 AM", "8:00 AM", "9:00 AM"].map((t, i) => (
              <tr key={t} className={i < 2 ? "h-[71px]" : "h-[46px]"}>
                <th className="border-b border-[#c8c8c8] pt-2 pr-2 text-right align-top">{t}</th>
                {days.map((d, j) => (
                  <td key={d} className={cell + (i < 2 ? "border-b" : "")}>
                    <div className={(i < 2 ? "h-[70px] " : "mb-[12px] h-[34px] ") + (i === 0 || j === 0 ? "bg-[#efefef]" : "")}>
                      {i < 2 && <div className="h-[35px] border-b border-dotted border-[#c8c8c8]" />}
                    </div>
                    {i === 1 && j === 2 && (
                      <div className="absolute top-0 -left-[3px] z-10 flex h-[69px] w-[180px] items-start gap-[6px] rounded-[4px] border border-[#ff0000] bg-[#f55800] px-1 pt-[2px] whitespace-nowrap text-white">
                        <svg width="15" height="15" viewBox="0 0 16 16" className="mt-[2px] shrink-0" fill="none" stroke="currentColor" strokeWidth="2" aria-hidden="true">
                          <path d="M7 2.800A6 6 0 1 0 13.200 5" />
                          <path d="M7 0l6 2.500L8 5.500z" fill="currentColor" stroke="none" />
                        </svg>
                        Event Title
                      </div>
                    )}
                  </td>
                ))}
              </tr>
            ))}
          </tbody>
        </table>
      </div>
      <div className="flex h-[44px] items-center pl-[15px]">
        <button className={BTN + " gap-1"}>
          <svg width="15" height="15" viewBox="0 0 16 16" fill="none" stroke="currentColor" aria-hidden="true">
            <circle cx="8" cy="8" r="7" />
            <path d="M7.500 3.500V8.500H12" />
          </svg>
          Show business hours
        </button>
      </div>
    </div>
  );
}

function EventCard({ side }: { side: "left" | "right" }) {
  return (
    <div className={"relative h-[103px] w-[205px] rounded-[4px] border border-[#c8c8c8] bg-white px-[15px] pt-[11px] shadow-[0_2px_10px_rgba(0,0,0,0.16)] " + (side === "right" ? "ml-4" : "")}>
      <span className={"absolute top-[25px] size-[17px] rotate-45 border-[#c8c8c8] bg-white " + (side === "left" ? "-right-[9px] border-t border-r" : "-left-[9px] border-b border-l")} />
      <h3 className="text-[15px] leading-[20px]">Event title</h3>
      <p className="mt-[6px] text-[12px] leading-[16px] text-[#757575]">Event subtitle</p>
      <p className="mt-[13px]">Event content</p>
    </div>
  );
}

function TimelineEvent({ date, side, cls }: { date: string; side: "left" | "right"; cls: string }) {
  return (
    <div className={"relative grid grid-cols-[205px_46px_221px] items-start " + cls}>
      {side === "left" ? <EventCard side="left" /> : <time className="mt-[25px] text-right">{date}</time>}
      <span className="mt-[27px] size-[15px] justify-self-center rounded-full bg-[#f55800]" />
      {side === "right" ? <EventCard side="right" /> : <time className="mt-[25px]">{date}</time>}
    </div>
  );
}

function YearTag({ y, cls }: { y: string; cls: string }) {
  return <div className={"relative ml-[190px] h-[27px] w-[76px] rounded-[4px] bg-[#f55800] text-center leading-[27px] text-white " + cls}>{y}</div>;
}

function Timeline() {
  return (
    <div className="relative mt-[21px] ml-[38px] h-[812px]">
      <div className="absolute inset-y-0 left-[225px] w-[6px] rounded-[3px] border border-[#c8c8c8] bg-[#ebebeb]" />
      <div className="flow-root">
        <YearTag y="2010" cls="mt-[38px]" />
        <TimelineEvent date="Apr 11, 2010" side="left" cls="mt-[39px]" />
        <TimelineEvent date="May 11, 2010" side="right" cls="mt-[77px]" />
        <YearTag y="2011" cls="mt-[38px]" />
        <TimelineEvent date="Oct 11, 2011" side="left" cls="mt-[39px]" />
        <TimelineEvent date="Dec 11, 2011" side="right" cls="mt-[77px]" />
      </div>
    </div>
  );
}

function FilterSelect({ v, label }: { v: string; label: string }) {
  return (
    <div className="relative shrink-0">
      <select aria-label={label} className="h-[29px] w-[134px] appearance-none rounded-[4px] border border-[#c8c8c8] bg-[#ebebeb] pl-2"><option>{v}</option></select>
      <Icon name="down" size={13} className="pointer-events-none absolute top-2 right-[6px]" />
    </div>
  );
}

function FilterBuilder() {
  const rules = [["Name", "Is equal to"], ["Price", "Is greater than"], ["First Ordered", "Is before"]];
  return (
    <div className="w-[400px]">
      <div className="flex h-[46px] items-center gap-2 border border-[#272727] pl-[15px]">
        <div className="flex">
          <button className={SEG_ON}>And</button>
          <button className={SEG}>Or</button>
        </div>
        <button className={BTN + " gap-1"}><Icon name="addExp" size={15} />Add Expression</button>
        <button className={BTN + " gap-1"}><Icon name="addGroup" size={15} />Add Group</button>
      </div>
      {rules.map(([f, op], i) => (
        <div key={f} className="relative pt-2 pl-[15px]">
          <span className={"absolute top-0 left-[7px] w-px bg-[#c8c8c8] " + (i === 2 ? "h-[50px]" : "h-full")} />
          <span className="absolute top-[49px] left-[7px] h-px w-2 bg-[#c8c8c8]" />
          <div className="h-[82px] border border-[#272727] pt-[7px] pl-[15px]">
            <div className="flex gap-2">
              <FilterSelect v={f} label="Field" />
              <FilterSelect v={op} label="Operator" />
            </div>
            <button aria-label="Remove" className="mt-2 flex h-[29px] items-center"><Line name="close" size={14} w={2.4} /></button>
          </div>
        </div>
      ))}
    </div>
  );
}

function Pivot() {
  const data = [
    ["Austell", "$514.14", "$2.057"],
    ["Biloxi", "$344.69", "$2.568"],
    ["Braintree", "$96.89", ""],
    ["Casper", "$1070.34", "$3.014"],
    ["Clearw…", "$514.14", "$2.057"],
    ["Destin", "$344.69", "$2.568"],
    ["Euclid", "$96.89", ""],
    ["Everett", "$1070.34", "$3.014"],
  ];
  const h = "border-b border-l border-[#c8c8c8] bg-[#efefef] px-2 text-left align-top font-normal whitespace-nowrap leading-[34px] ";
  const ic = "mr-[8px] ml-[5px] inline align-[-4px]";
  return (
    <div className="mt-[71px] h-[529px] overflow-hidden border-b border-[#c8c8c8]">
      <table className="w-[380px] table-fixed border-separate border-spacing-0 border-t border-[#c8c8c8]">
        <colgroup>
          <col className="w-[72px]" />
          <col className="w-[72px]" />
          <col className="w-[118px]" />
          <col className="w-[118px]" />
        </colgroup>
        <thead>
          <tr className="h-[35px]">
            <th rowSpan={7} colSpan={2} className="border-b border-l border-[#c8c8c8] bg-[#efefef]" />
            <th colSpan={2} className={h}><Line name="chevWideUp" className={ic} /><b>ALL PERIODS</b></th>
          </tr>
          <tr className="h-[36px]"><th colSpan={2} className={h}><Line name="chevWideUp" className={ic} />CY 2010</th></tr>
          <tr className="h-[35px]">
            <th className={h}><Line name="chevWideUp" className={ic} />H2 CY 20…</th>
            <th rowSpan={2} className={h}>H2 CY 2010</th>
          </tr>
          <tr className="h-[36px]"><th className={h}><Line name="chevWideDown" className={ic} />Q4 CY 20…</th></tr>
          <tr className="h-[35px]">
            <th rowSpan={2} className={h}><Line name="chevWideDown" className={ic} /><b>ALL PRO…</b></th>
            <th className={h}><Line name="chevWideUp" className={ic} /></th>
          </tr>
          <tr className="h-[36px]"><th className={h}>Accessories</th></tr>
          <tr className="h-[19px]"><th colSpan={2} className="border-l border-[#c8c8c8] bg-[#efefef]" /></tr>
        </thead>
        <tbody>
          {data.map((r, i) => (
            <tr key={r[0]} className="odd:h-[35px] even:h-[36px]">
              {i === 0 && <th rowSpan={9} className={h}><Line name="chevWideUp" className={ic} /><b>A…</b></th>}
              <th className={h}>{r[0]}</th>
              <td className="border-b border-l border-[#c8c8c8] px-2">{r[1]}</td>
              <td className="border-b border-l border-[#c8c8c8] px-2">{r[2]}</td>
            </tr>
          ))}
          <tr className="h-[35px]">
            <th className={h} />
            <td className="border-l border-[#c8c8c8]" />
            <td />
          </tr>
        </tbody>
      </table>
    </div>
  );
}

export default function App() {
  return (
    <div className="flex items-stretch bg-white px-[19px] py-[19px] font-['Liberation_Sans',Arial,sans-serif] text-[13px] leading-[19px] text-[#272727]">
      <Sidebar />
      <main className="min-w-0 flex-1 overflow-hidden border-l border-[#c8c8c8]">
        <Toolbar />
        <NavigationRow />
        <InputsRow />
        <PopupsRow />
        <PanelsRow />
        <MenusRow />
        <GridSection />
        <FileManager />
        <section className="grid min-h-[630px] grid-cols-[571px_minmax(0,1fr)] items-start">
          <Spreadsheet />
          <div>
            <Editor />
            <Scheduler />
          </div>
        </section>
        <section className="grid min-h-[927px] grid-cols-[571px_minmax(0,1fr)] items-start">
          <Timeline />
          <div>
            <FilterBuilder />
            <Pivot />
          </div>
        </section>
      </main>
    </div>
  );
}
